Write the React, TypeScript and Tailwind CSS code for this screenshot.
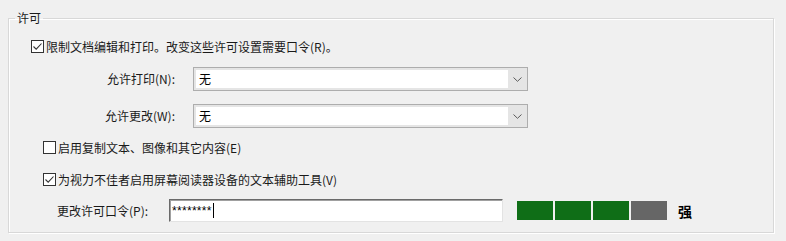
import React from 'react';

const font = { fontFamily: '"Noto Sans CJK SC", "Noto Sans", sans-serif' };

type CheckProps = { checked: boolean; label: string };

const CheckBox: React.FC<CheckProps> = ({ checked, label }) => (
  <label className="flex items-center h-[13px]">
    <span className="flex items-center justify-center w-[13px] h-[13px] border border-[#333333] bg-white shrink-0">
      {checked && (
        <svg width="11" height="11" viewBox="0 0 11 11">
          <path d="M1.5 5.5 L4.2 8.2 L9.5 2.5" fill="none" stroke="#333333" strokeWidth="1.1" />
        </svg>
      )}
    </span>
    <span className="ml-[2px] text-[12px] leading-[16px] text-[#1a1a1a] whitespace-nowrap">{label}</span>
  </label>
);

type SelectProps = { label: string; value: string };

const SelectRow: React.FC<SelectProps> = ({ label, value }) => (
  <div className="flex items-center h-[24px]">
    <span className="w-[166px] text-right text-[12px] leading-[16px] text-[#1a1a1a]">{label}</span>
    <div className="ml-[18px] flex w-[335px] h-[24px] border border-[#adadad] bg-[#e5e5e5]">
      <div className="flex-1 m-[2px] mr-0 bg-white flex items-center pl-[3px] text-[12px] leading-[16px] text-black">
        {value}
      </div>
      <div className="w-[19px] flex items-center justify-center">
        <svg width="9" height="5" viewBox="0 0 9 5">
          <path d="M0.5 0.5 L4.5 4.3 L8.5 0.5" fill="none" stroke="#5a5a5a" strokeWidth="1" />
        </svg>
      </div>
    </div>
  </div>
);

export default function App() {
  return (
    <div className="w-[786px] h-[241px] bg-[#f0f0f0] pt-[10px] pl-[8px]" style={font}>
      <fieldset className="w-[766px] h-[223px] border border-[#d8d8d8] shadow-[inset_1px_1px_0_#ffffff,1px_1px_0_#ffffff]">
        <legend className="ml-[6px] px-[2px] text-[12px] leading-[16px] text-[#1a1a1a]">许可</legend>
        <div className="flex flex-col">
          <div className="mt-[14px] pl-[22px]">
            <CheckBox checked label="限制文档编辑和打印。改变这些许可设置需要口令(R)。" />
          </div>
          <div className="mt-[14px]">
            <SelectRow label="允许打印(N):" value="无" />
          </div>
          <div className="mt-[13px]">
            <SelectRow label="允许更改(W):" value="无" />
          </div>
          <div className="mt-[13px] pl-[34px]">
            <CheckBox checked={false} label="启用复制文本、图像和其它内容(E)" />
          </div>
          <div className="mt-[19px] pl-[34px]">
            <CheckBox checked label="为视力不佳者启用屏幕阅读器设备的文本辅助工具(V)" />
          </div>
          <div className="mt-[13px] flex items-center h-[23px]">
            <span className="ml-[48px] w-[112px] text-[12px] leading-[16px] text-[#1a1a1a]">更改许可口令(P):</span>
            <div className="w-[334px] h-[23px] bg-white border border-t-[#6a6a6a] border-l-[#6a6a6a] border-r-[#e3e3e3] border-b-[#e3e3e3] shadow-[inset_1px_1px_0_#a0a0a0] flex items-center pl-[2px]">
              <span className="text-[12px] leading-[14px] text-black tracking-[0.3px]" style={{ fontFamily: '"Liberation Sans", sans-serif' }}>
                ********
              </span>
              <span className="w-px h-[15px] bg-black ml-[1px]" />
            </div>
            <div className="ml-[14px] flex gap-[2px]">
              <div className="w-[36px] h-[19px] bg-[#0f6e17]" />
              <div className="w-[36px] h-[19px] bg-[#0f6e17]" />
              <div className="w-[36px] h-[19px] bg-[#0f6e17]" />
              <div className="w-[36px] h-[19px] bg-[#666666]" />
            </div>
            <span className="ml-[11px] text-[14px] leading-[16px] font-bold text-black">强</span>
          </div>
        </div>
      </fieldset>
    </div>
  );
}
